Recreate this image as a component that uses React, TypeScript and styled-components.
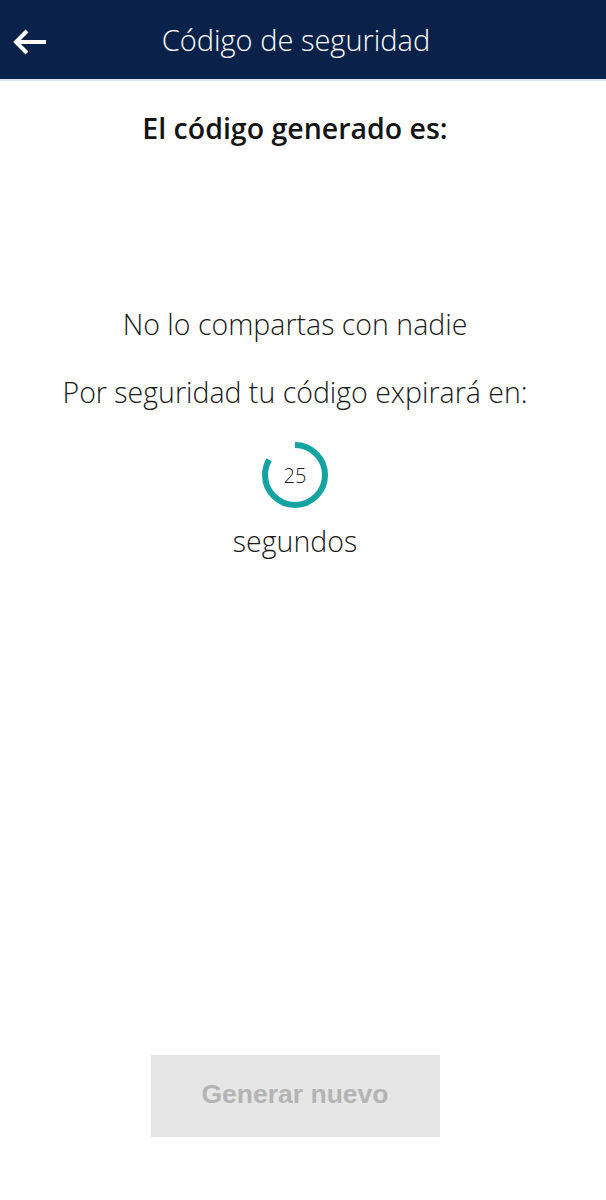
import { createGlobalStyle } from 'styled-components';
import styled from 'styled-components';

const SECONDS_TOTAL = 30;
const SECONDS_LEFT = 25;

const GlobalStyle = createGlobalStyle`
  html, body {
    margin: 0;
    padding: 0;
    background: #ffffff;
    font-family: "Open Sans", Lato, sans-serif;
  }
`;

const Screen = styled.div`
  width: 606px;
  height: 1200px;
  display: flex;
  flex-direction: column;
  background: #ffffff;
`;

const Header = styled.header`
  height: 79px;
  background-color: #0a2249;
  border-bottom: 2px solid #dfe6ee;
  display: flex;
  align-items: center;
  position: relative;
`;

const BackButton = styled.button`
  position: absolute;
  left: 10px;
  top: 24px;
  width: 40px;
  height: 36px;
  padding: 0;
  border: none;
  background: transparent;
  display: flex;
  align-items: center;
  justify-content: center;
  cursor: pointer;
`;

const Title = styled.h1`
  flex: 1;
  margin: 0;
  padding-right: 14px;
  text-align: center;
  color: #ffffff;
  font-size: 29px;
  font-weight: 300;
`;

const Body = styled.main`
  flex: 1;
  display: flex;
  flex-direction: column;
  align-items: center;
  padding-top: 27px;
  padding-right: 16px;
`;

const Heading = styled.h2`
  margin: 0;
  font-size: 28.5px;
  font-weight: 600;
  color: #141414;
  line-height: 40px;
`;

const Line = styled.p<{ $top: number }>`
  margin: ${p => p.$top}px 0 0;
  font-size: 28.5px;
  font-weight: 300;
  color: #1a1a1a;
  line-height: 36px;
`;

const Timer = styled.div`
  margin-top: 31px;
  width: 68px;
  height: 68px;
  position: relative;
  display: flex;
  align-items: center;
  justify-content: center;
`;

const TimerNumber = styled.span`
  position: relative;
  font-size: 20px;
  font-weight: 300;
  color: #1a1a1a;
`;

const Ring = styled.svg`
  position: absolute;
  inset: 0;
`;

const Footer = styled.div`
  display: flex;
  justify-content: center;
  padding-right: 16px;
  padding-bottom: 63px;
`;

const NewButton = styled.button`
  width: 289px;
  height: 82px;
  border: none;
  background-color: #e6e6e6;
  color: #b4b4b4;
  font-family: "Liberation Sans", Arial, sans-serif;
  font-size: 26.5px;
  font-weight: 700;
  padding: 0 0 4px;
  cursor: not-allowed;
`;

const App = () => {
  const r = 30;
  const circ = 2 * Math.PI * r;
  const shown = (SECONDS_LEFT / SECONDS_TOTAL) * circ;

  return (
    <>
      <GlobalStyle />
      <Screen>
        <Header>
          <BackButton aria-label="Volver">
            <svg width="36" height="28" viewBox="0 0 36 28">
              <path d="M34 14 H6" stroke="#fff" strokeWidth="4" fill="none" />
              <path d="M15 3 L4 14 L15 25" stroke="#fff" strokeWidth="4" fill="none" strokeLinecap="butt" strokeLinejoin="miter" />
            </svg>
          </BackButton>
          <Title>Código de seguridad</Title>
        </Header>
        <Body>
          <Heading>El código generado es:</Heading>
          <Line $top={158}>No lo compartas con nadie</Line>
          <Line $top={32}>Por seguridad tu código expirará en:</Line>
          <Timer>
            <Ring width="68" height="68" viewBox="0 0 68 68">
              <circle
                cx="34"
                cy="34"
                r={r}
                fill="none"
                stroke="#14a3a1"
                strokeWidth="6"
                strokeDasharray={`${shown} ${circ}`}
                transform="rotate(-90 34 34)"
              />
            </Ring>
            <TimerNumber>{SECONDS_LEFT}</TimerNumber>
          </Timer>
          <Line $top={14}>segundos</Line>
        </Body>
        <Footer>
          <NewButton disabled>Generar nuevo</NewButton>
        </Footer>
      </Screen>
    </>
  );
};

export default App;
